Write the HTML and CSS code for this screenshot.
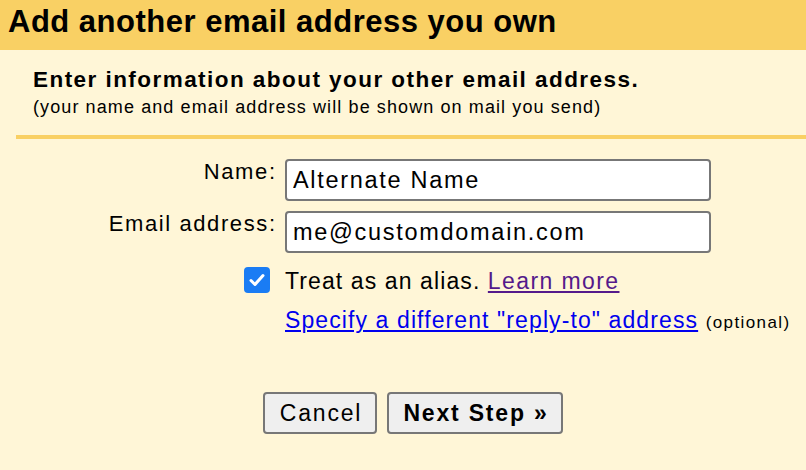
FILE: index.html
```html
<!DOCTYPE html>
<html>
<head>
<meta charset="utf-8">
<link rel="stylesheet" href="styles.css">
</head>
<body>
<div class="header">Add another email address you own</div>
<div class="content">
  <div class="intro">
    <div class="intro-title">Enter information about your other email address.</div>
    <div class="intro-sub">(your name and email address will be shown on mail you send)</div>
  </div>
  <div class="divider"></div>
  <div class="form">
    <label class="label" for="name">Name:</label>
    <input class="field" id="name" type="text" value="Alternate Name">
    <label class="label" for="email">Email address:</label>
    <input class="field" id="email" type="text" value="me@customdomain.com">
    <div class="check-cell">
      <span class="checkbox">
        <svg width="16" height="14" viewBox="0 0 16 14"><path d="M2 7.5 L6 11.5 L14 2.5" fill="none" stroke="#fff" stroke-width="3" stroke-linecap="round" stroke-linejoin="round"/></svg>
      </span>
    </div>
    <div class="alias">Treat as an alias. <a class="visited" href="#">Learn more</a></div>
    <div></div>
    <div class="reply"><a class="link" href="#">Specify a different "reply-to" address</a> <span class="optional">(optional)</span></div>
  </div>
  <div class="buttons">
    <button class="btn btn-cancel">Cancel</button>
    <button class="btn btn-next">Next Step »</button>
  </div>
</div>
</body>
</html>
```
FILE: styles.css
```css
html, body {
  margin: 0;
  padding: 0;
  background: #fff6d7;
  font-family: "Liberation Sans", Arial, sans-serif;
  color: #000;
}
.header {
  background: #f9d064;
  height: 50px;
  box-sizing: border-box;
  padding: 4px 0 0 8px;
  font-size: 31px;
  font-weight: bold;
  line-height: 36px;
  letter-spacing: 0.5px;
}
.content {
  padding: 0 0 0 16px;
}
.intro {
  padding: 17px 0 0 17px;
}
.intro-title {
  font-size: 22.5px;
  font-weight: bold;
  line-height: 26px;
  letter-spacing: 1.45px;
}
.intro-sub {
  margin-top: 4px;
  font-size: 18px;
  line-height: 20px;
  letter-spacing: 1.1px;
}
.divider {
  margin-top: 18px;
  height: 4px;
  background: #f9d064;
}
.form {
  display: grid;
  grid-template-columns: 259px 426px;
  column-gap: 10px;
  row-gap: 10px;
  margin-top: 20px;
}
.label {
  text-align: right;
  font-size: 22px;
  line-height: 24px;
  padding-top: 1px;
  letter-spacing: 1.6px;
  margin-right: -1.6px;
}
.field {
  box-sizing: border-box;
  height: 42px;
  width: 426px;
  border: 2px solid #777;
  border-radius: 4px;
  background: #fff;
  font-family: "Liberation Sans", Arial, sans-serif;
  font-size: 23.5px;
  letter-spacing: 1.7px;
  padding: 1px 8px 0 6px;
  margin: 0;
  color: #000;
  outline: none;
}
.check-cell {
  display: flex;
  justify-content: flex-end;
  padding-top: 4px;
  padding-right: 5px;
}
.checkbox {
  width: 26px;
  height: 26px;
  border-radius: 4px;
  background: #1a7cf4;
  display: flex;
  align-items: center;
  justify-content: center;
}
.alias {
  font-size: 23px;
  line-height: 26px;
  padding-top: 5px;
  letter-spacing: 1.1px;
  white-space: nowrap;
}
.visited {
  color: #551a8b;
  letter-spacing: 1.4px;
}
.reply {
  font-size: 23px;
  line-height: 26px;
  padding-top: 3px;
  letter-spacing: 1.1px;
  white-space: nowrap;
}
.link {
  color: #0000ee;
}
.optional {
  font-size: 17px;
  letter-spacing: 1.4px;
}
.buttons {
  display: flex;
  gap: 10px;
  margin-top: 56px;
  padding-left: 247px;
}
.btn {
  box-sizing: border-box;
  height: 42px;
  background: #efefef;
  border: 2px solid #777;
  border-radius: 4px;
  font-family: "Liberation Sans", Arial, sans-serif;
  font-size: 23px;
  letter-spacing: 1.8px;
  color: #000;
  padding: 0 0 0 2px;
  margin: 0;
  text-align: center;
}
.btn-cancel {
  width: 114px;
}
.btn-next {
  width: 176px;
  font-weight: bold;
}
```
